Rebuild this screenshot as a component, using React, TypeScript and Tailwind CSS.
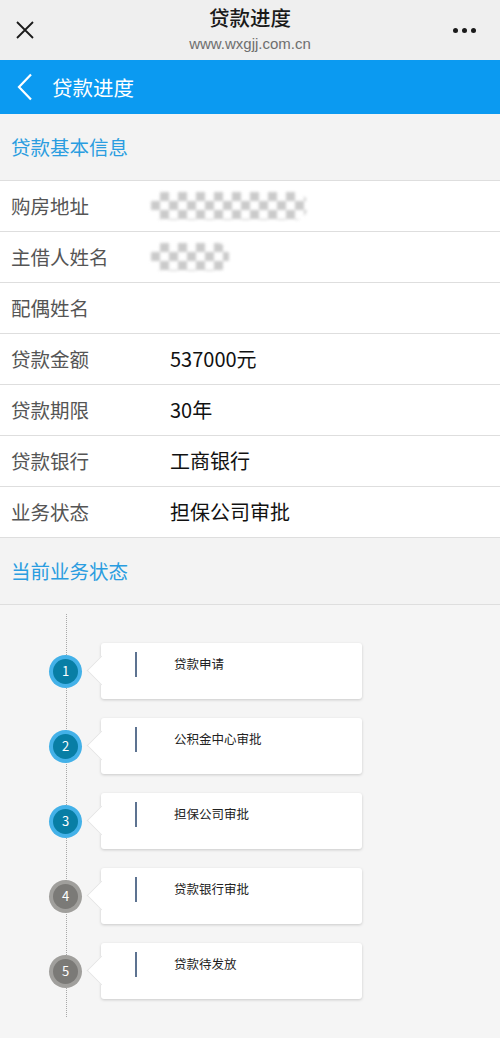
import React from 'react';

const font = { fontFamily: '"Noto Sans CJK SC", "Noto Sans", sans-serif' };

type Row = { label: string; value?: string; mask?: number };

const rows: Row[] = [
  { label: '购房地址', mask: 156 },
  { label: '主借人姓名', mask: 78 },
  { label: '配偶姓名' },
  { label: '贷款金额', value: '537000元' },
  { label: '贷款期限', value: '30年' },
  { label: '贷款银行', value: '工商银行' },
  { label: '业务状态', value: '担保公司审批' },
];

const steps = [
  { n: 1, title: '贷款申请', done: true },
  { n: 2, title: '公积金中心审批', done: true },
  { n: 3, title: '担保公司审批', done: true },
  { n: 4, title: '贷款银行审批', done: false },
  { n: 5, title: '贷款待发放', done: false },
];

const Mask: React.FC<{ width: number }> = ({ width }) => (
  <div
    className="h-[28px] rounded-[12px] blur-[1.5px] opacity-75 bg-[repeating-conic-gradient(#b9b9b9_0_25%,#ffffff_0_50%)] bg-[length:18px_18px]"
    style={{ width }}
  />
);

const SectionTitle: React.FC<{ text: string }> = ({ text }) => (
  <div className="h-[67px] flex items-center px-[11px] bg-[#f3f3f3] border-b border-[#dedede]">
    <span className="text-[19.5px] text-[#2a9de0]">{text}</span>
  </div>
);

export default function App() {
  return (
    <div className="w-[500px] min-h-[1038px] bg-[#f5f5f5]" style={font}>
      {/* wechat top bar */}
      <div className="h-[60px] bg-[#efefef] grid grid-cols-[1fr_auto_1fr] items-center px-[16px]">
        <svg width="18" height="18" viewBox="0 0 18 18" className="shrink-0">
          <path d="M1 1 L17 17 M17 1 L1 17" stroke="#1a1a1a" strokeWidth="1.8" />
        </svg>
        <div className="flex flex-col items-center leading-none -mt-[2px]">
          <span className="text-[20.5px] font-medium text-[#1a1a1a]">贷款进度</span>
          <span className="text-[15px] text-[#6e6e6e] mt-[8px]" style={{ fontFamily: '"Liberation Sans", Arial, sans-serif' }}>
            www.wxgjj.com.cn
          </span>
        </div>
        <div className="flex justify-end gap-[4px] pr-[8px]">
          <span className="w-[5px] h-[5px] rounded-full bg-[#1a1a1a]" />
          <span className="w-[5px] h-[5px] rounded-full bg-[#1a1a1a]" />
          <span className="w-[5px] h-[5px] rounded-full bg-[#1a1a1a]" />
        </div>
      </div>

      {/* blue nav bar */}
      <div className="h-[54px] bg-[#0b9af1] flex items-center pl-[17px] gap-[19px]">
        <svg width="16" height="28" viewBox="0 0 16 28">
          <path d="M14 1.5 L2 14 L14 26.5" fill="none" stroke="#ffffff" strokeWidth="2.2" />
        </svg>
        <span className="text-[20.5px] text-white">贷款进度</span>
      </div>

      <SectionTitle text="贷款基本信息" />

      <div className="bg-white">
        {rows.map((r) => (
          <div key={r.label} className="h-[51px] flex items-center border-b border-[#dedede] pl-[11px]">
            <span className="w-[140px] text-[19.5px] text-[#555555]">{r.label}</span>
            {r.value && <span className="pl-[19px] text-[20px] text-[#111111]">{r.value}</span>}
            {r.mask && <Mask width={r.mask} />}
          </div>
        ))}
      </div>

      <SectionTitle text="当前业务状态" />

      {/* timeline */}
      <div className="relative pt-[38px] pb-[38px]">
        <div className="absolute left-[66px] top-[9px] bottom-[20px] border-l-[1.5px] border-dotted border-[#a8a8a8]" />
        <div className="flex flex-col gap-[19px]">
          {steps.map((s) => (
            <div key={s.n} className="flex items-center">
              <div className="w-[101px] flex justify-center pl-[30px]">
                <div
                  className={`relative w-[33px] h-[33px] rounded-full flex items-center justify-center ${
                    s.done ? 'bg-[#43b1e8]' : 'bg-[#a09f9c]'
                  }`}
                >
                  <div
                    className={`w-[25px] h-[25px] rounded-full flex items-center justify-center text-[13px] text-white ${
                      s.done ? 'bg-[#087ea5]' : 'bg-[#7b7a77]'
                    }`}
                  >
                    {s.n}
                  </div>
                </div>
              </div>
              <div className="relative w-[261px] h-[56px] bg-white rounded-[3px] shadow-[0_1px_3px_rgba(0,0,0,0.18)]">
                <div className="absolute left-[-10px] top-[17px] w-[21px] h-[21px] bg-white rotate-45 border-l border-b border-[#e4e4e4]" />
                <div className="relative flex h-full">
                  <div className="ml-[34px] mt-[9px] w-[2px] h-[25px] bg-[#5d7391]" />
                  <span className="ml-[37px] mt-[15px] text-[12.5px] text-[#222222] leading-none">{s.title}</span>
                </div>
              </div>
            </div>
          ))}
        </div>
      </div>
    </div>
  );
}
